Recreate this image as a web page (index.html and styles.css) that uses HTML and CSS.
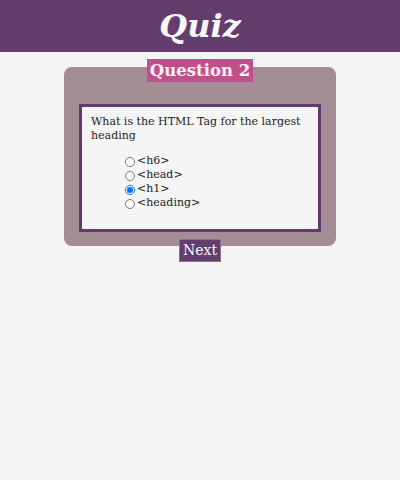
FILE: index.html
```html
<!DOCTYPE html>
<html lang="en">
<head>
<meta charset="utf-8">
<title>Quiz</title>
<link rel="stylesheet" href="styles.css">
</head>
<body>
<header class="top">
  <h1 class="title">Quiz</h1>
</header>
<main class="page">
  <section class="quiz">
    <h2 class="badge">Question 2</h2>
    <div class="card">
      <div class="question-box">
        <p class="question">What is the HTML Tag for the largest heading</p>
        <ul class="options">
          <li><label class="option"><input type="radio" name="q" class="radio">&lt;h6&gt;</label></li>
          <li><label class="option"><input type="radio" name="q" class="radio">&lt;head&gt;</label></li>
          <li><label class="option"><input type="radio" name="q" class="radio" checked>&lt;h1&gt;</label></li>
          <li><label class="option"><input type="radio" name="q" class="radio">&lt;heading&gt;</label></li>
        </ul>
      </div>
    </div>
    <button class="next" type="button">Next</button>
  </section>
</main>
</body>
</html>
```

FILE: styles.css
```css
html, body {
  margin: 0;
  padding: 0;
}
body {
  background: #f4f5f4;
  font-family: "DejaVu Serif", serif;
  color: #1c1c1c;
  width: 400px;
  height: 480px;
}
.top {
  background: #633e6c;
  height: 52px;
  display: flex;
  align-items: center;
  justify-content: center;
}
.title {
  margin: 0;
  color: #f7f6f9;
  font-size: 32px;
  font-style: italic;
  font-weight: bold;
  line-height: 36px;
}
.page {
  display: flex;
  flex-direction: column;
  align-items: center;
}
.quiz {
  display: flex;
  flex-direction: column;
  align-items: center;
}
.badge {
  position: relative;
  z-index: 1;
  margin: 7px 0 0;
  height: 23px;
  box-sizing: border-box;
  padding: 0 3px;
  background: #c1508a;
  color: #fbf3f8;
  font-size: 16.5px;
  font-weight: bold;
  line-height: 23px;
}
.card {
  margin-top: -15px;
  width: 272px;
  box-sizing: border-box;
  padding: 37px 15px 14px;
  background: #a58d95;
  border-radius: 8px;
}
.question-box {
  border: 3px solid #5f3b6b;
  background: #f4f5f4;
  padding: 8px 9px;
}
.question {
  margin: 0;
  font-size: 11px;
  line-height: 14px;
}
.options {
  list-style: none;
  margin: 11px 0;
  padding: 0 0 0 34px;
  font-size: 11px;
  line-height: 14px;
}
.option {
  display: flex;
  align-items: center;
}
.radio {
  width: 10px;
  height: 10px;
  margin: 1px 2px 0 0;
}
.next {
  position: relative;
  margin-top: -7px;
  height: 23px;
  padding: 0 3px;
  background: #633e6c;
  color: #f7f6f9;
  border: 1px solid #8c7193;
  font-family: "DejaVu Serif", serif;
  font-size: 14px;
  line-height: 21px;
}
```
